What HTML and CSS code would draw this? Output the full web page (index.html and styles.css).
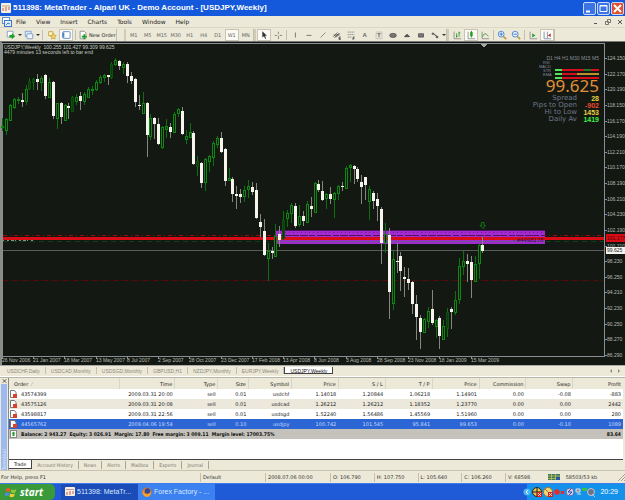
FILE: index.html
```html
<!DOCTYPE html>
<html lang="en">
<head>
<meta charset="utf-8">
<title>MetaTrader</title>
<link rel="stylesheet" href="styles.css">
</head>
<body>
<header class="titlebar">
  <svg class="app-icon" viewBox="0 0 10 10"><rect width="10" height="10" rx="1" fill="#f4efe2"/><path d="M1 3h8" stroke="#c9a46a"/><path d="M2 8V5M5 8V4M8 7V4" stroke="#d05a3c"/></svg>
  <h1>511398: MetaTrader - Alpari UK - Demo Account - [USDJPY,Weekly]</h1>
  <div class="caption-buttons">
    <button aria-label="Minimize"><svg viewBox="0 0 13 13"><path d="M3 9.500h4" stroke="#fff" stroke-width="2"/></svg></button>
    <button aria-label="Maximize"><svg viewBox="0 0 13 13"><path d="M3 3.500h7v6H3zM3 4h7" fill="none" stroke="#fff"/></svg></button>
    <button class="close" aria-label="Close"><svg viewBox="0 0 13 13"><path d="M3 3l7 7M10 3l-7 7" stroke="#fff" stroke-width="2"/></svg></button>
  </div>
</header>

<nav class="menubar">
  <svg class="menu-icon" viewBox="0 0 10 10"><rect x="0.500" y="0.500" width="7" height="6" fill="#fff" stroke="#5c93d8"/><rect x="2.500" y="3.500" width="7" height="6" fill="#e4effc" stroke="#3f78c8"/><path d="M4 8l2-2 2 1" stroke="#3f78c8" fill="none"/></svg>
  <a href="#">File</a><a href="#">View</a><a href="#">Insert</a><a href="#">Charts</a><a href="#">Tools</a><a href="#">Window</a><a href="#">Help</a>
  <div class="mdi-buttons">
    <button aria-label="Minimize chart"><svg viewBox="0 0 6 6"><path d="M1 4.500h3" stroke="#555"/></svg></button>
    <button aria-label="Restore chart"><svg viewBox="0 0 6 6"><path d="M2.500 .500h3v3h-3zM.500 2.500h3v3h-3z" fill="#ece9d8" stroke="#777"/></svg></button>
    <button aria-label="Close chart"><svg viewBox="0 0 6 6"><path d="M1 1l4 4M5 1l-4 4" stroke="#555"/></svg></button>
  </div>
</nav>

<div class="toolbar">
  <div class="tools tools-file">
    <button aria-label="New chart"><svg viewBox="0 0 12 12"><path d="M1.500 1.500h7v7h-7z" fill="#fff" stroke="#7d9bb8"/><path d="M4 6h3V3.500L11 7.500 7 11V9H4z" fill="#22a02a"/></svg></button>
    <i class="caret"></i>
    <button aria-label="Profiles"><svg viewBox="0 0 12 12"><rect x="1.500" y="1.500" width="7" height="6" fill="#dbe8f8" stroke="#7ba0cf"/><rect x="3.500" y="4.500" width="7" height="6" rx="1" fill="#eef5fd" stroke="#6a92c6"/></svg></button>
    <i class="caret"></i>
    <i class="sep"></i>
    <button aria-label="Navigator"><svg viewBox="0 0 12 12"><path d="M2 2h5v5H2z" fill="#fff4c8" stroke="#c79a35"/><path d="M7.500 4l1.200 2.300 2.300.4-1.700 1.700.4 2.400-2.200-1.100-2.200 1.100.4-2.400L4 6.700l2.300-.4z" fill="#f5d860" stroke="#b98c20" stroke-width=".7"/></svg></button>
    <button class="on" aria-label="Terminal"><svg viewBox="0 0 12 12"><rect x="2" y="2" width="9" height="8" rx="1" fill="#fff" stroke="#4a80c8"/><path d="M3 3v6" stroke="#4a80c8" stroke-width="2"/></svg></button>
    <i class="sep"></i>
    <button class="order"><svg viewBox="0 0 12 12"><path d="M2.500 1.500h5l2 2v7h-7z" fill="#fff" stroke="#888"/><path d="M7.500 5v6M4.500 8h6" stroke="#22a02a" stroke-width="2"/></svg>New Order</button>
  </div>
  <div class="tools tools-period">
    <button>M1</button><button>M5</button><button>M15</button><button>M30</button><button>H1</button><button>H4</button><button>D1</button><button class="on">W1</button><button>MN</button>
  </div>
  <div class="tools tools-draw">
    <button class="on" aria-label="Cursor"><svg viewBox="0 0 12 12"><path d="M4 1.500v7.500l2-1.500 1.300 3 1.200-.6-1.300-2.900h2.300z" fill="#333"/></svg></button>
    <button aria-label="Crosshair"><svg viewBox="0 0 12 12"><path d="M6.500 2v3M6.500 7v4M2 6.500h3M8 6.500h3" stroke="#777"/></svg></button>
    <i class="sep"></i>
    <button aria-label="Vertical line"><svg viewBox="0 0 12 12"><path d="M6.500 3v6" stroke="#666"/></svg></button>
    <button aria-label="Horizontal line"><svg viewBox="0 0 12 12"><path d="M3 6.500h6" stroke="#666"/></svg></button>
    <button aria-label="Trendline"><svg viewBox="0 0 12 12"><path d="M3 9l6-6" stroke="#777"/></svg></button>
    <button aria-label="Channel"><svg viewBox="0 0 12 12"><path d="M1.500 8l5-5M3 9l5-5M4.500 9l5-5M2 6h7" stroke="#555"/><path d="M10.500 8.500H8.500v3h2M8.500 10h2" stroke="#444" fill="none"/></svg></button>
    <button aria-label="Fibonacci"><svg viewBox="0 0 12 12"><path d="M2 2.500h8M2 5.500h8M2 8.500h5" stroke="#888" stroke-dasharray="2 .5"/><path d="M8.500 12V8.500h2M8.500 10h1.500" stroke="#444" fill="none"/></svg></button>
    <button class="bold">A</button>
    <button aria-label="Text label"><svg viewBox="0 0 12 12"><rect x="2.500" y="2.500" width="7" height="8" fill="none" stroke="#999" stroke-dasharray="1 1"/><path d="M4 4.500h4M6 4.500V9" stroke="#555"/></svg></button>
    <button aria-label="Ellipse"><svg viewBox="0 0 12 12"><ellipse cx="6" cy="6.500" rx="4" ry="2.500" fill="#777" stroke="#444" stroke-width=".7"/></svg></button>
    <button aria-label="Triangle"><svg viewBox="0 0 12 12"><path d="M3 8l3-3 3 3z" fill="#555" stroke="#444"/></svg></button>
    <button aria-label="Rectangle"><svg viewBox="0 0 12 12"><path d="M3 4.500h6v4H3z" fill="#777" stroke="#555"/></svg></button>
    <button aria-label="Arrows"><svg viewBox="0 0 12 12"><path d="M2 4.500h3M3.500 3v3M5 5l4 3.500M7 8.500h3M8.500 7v3" fill="none" stroke="#555" stroke-width="1.300"/></svg></button>
    <i class="caret"></i>
  </div>
  <div class="tools tools-view">
    <button aria-label="Bar chart"><svg viewBox="0 0 12 12"><path d="M2.500 2v8.500H11" stroke="#888" fill="none"/><path d="M5.500 4v5M8.500 2v6M8 3.500h2M5 7.500h2" stroke="#2d8f2d"/></svg></button>
    <button class="on" aria-label="Candlesticks"><svg viewBox="0 0 12 12"><path d="M2.500 2v8.500H11" stroke="#888" fill="none"/><path d="M6.500 1v8" stroke="#187018"/><rect x="5" y="2.500" width="3" height="5" fill="#22a022"/></svg></button>
    <button aria-label="Line chart"><svg viewBox="0 0 12 12"><path d="M2.500 2v8.500H11" stroke="#888" fill="none"/><path d="M3 8c2-5 4-4 7-.500" stroke="#2d8f2d" fill="none"/></svg></button>
    <i class="sep"></i>
    <button aria-label="Zoom in"><svg viewBox="0 0 12 12"><path d="M7.500 7.500L11 11" stroke="#c29a3c" stroke-width="2"/><circle cx="5" cy="5" r="3.500" fill="#e8f3ff" stroke="#3a7cd0"/><path d="M3 5h4M5 3v4" stroke="#2a62c0"/></svg></button>
    <button aria-label="Zoom out"><svg viewBox="0 0 12 12"><path d="M7.500 7.500L11 11" stroke="#c29a3c" stroke-width="2"/><circle cx="5" cy="5" r="3.500" fill="#e8f3ff" stroke="#3a7cd0"/><path d="M3 5h4" stroke="#2a62c0"/></svg></button>
    <i class="sep"></i>
    <button aria-label="Auto scroll"><svg viewBox="0 0 12 12"><path d="M2.500 2v8.500H11" stroke="#888" fill="none"/><path d="M5 4l4 2.500L5 9z" fill="#2d9f3d"/></svg></button>
    <button class="on" aria-label="Chart shift"><svg viewBox="0 0 12 12"><path d="M2.500 2v8.500H11M6.500 2v8" stroke="#7888a8" fill="none"/><path d="M10.500 4L7 6.500l3.500 2z" fill="#c03a3a"/></svg></button>
  </div>
</div>

<main class="chart">
  <svg id="plot" class="plot" viewBox="0 42 625 323" role="img" aria-label="USDJPY weekly chart">
    <g shape-rendering="crispEdges">
      <rect x="0" y="42" width="2" height="323" fill="#8a8c86"/>
      <path d="M2.500 356V43.500H604.500" class="frame"/>
      <path d="M604.500 43v313.500H2" class="frame"/>
      <path d="M480 44h7l-3 3h-1z" fill="#a8aaa6"/>
      <rect x="276" y="230" width="269" height="14" fill="#a02cd0"/>
      <path d="M276 230.500h269" stroke="#4c1468"/>
      <path d="M285 232.500h258" stroke="#7c1090" stroke-dasharray="1 3"/>
      <path d="M276 241.500h269" stroke="#6e5a86" stroke-dasharray="2 1 4 1"/>
      <path d="M3 235.500h601" stroke="#980c12" stroke-dasharray="4 3 1 3"/>
      <path d="M277 235.500h268" stroke="#501070" stroke-dasharray="6 2"/>
      <path d="M3 241.500h273M546 241.500h58" stroke="#0b4414" stroke-dasharray="5 4"/>
      <path d="M3 240.500h32" stroke="#8b8f88" stroke-dasharray="1 3 2 2 3 1"/>
      <path d="M3 237.500h601" stroke="#7c0a10"/>
      <rect x="3" y="237" width="601" height="3" fill="#d80c14"/>
      <path d="M3 250.500h601" stroke="#575c5c"/>
      <path d="M3 280.500h601" stroke="#5a080c" stroke-dasharray="5 2 1 2"/>
    </g>
    <text x="513" y="242" class="order-tag">- #4498178</text>
    <g id="candles" shape-rendering="crispEdges"></g>
    <path d="M480 225.500h1.500v-3h2.500v3h1.500l-2.500 3z" fill="none" stroke="#0c8a14" stroke-width=".8"/>
    <g id="axes"></g>
    <rect x="606" y="234" width="19" height="8" fill="#d80c14"/>
    <text x="607" y="240" class="tag-red">101.177</text>
    <rect x="606" y="247" width="19" height="7" fill="#f4f4ee"/>
    <text x="607" y="252" class="tag-now">99.625</text>
  </svg>
  <div class="chart-caption">
    <p>USDJPY,Weekly&nbsp; 100.255 101.427 99.309 99.625</p>
    <p>4479 minutes 13 seconds left to bar end</p>
  </div>
  <section class="quote">
    <div class="frames">D1 H4 H1 M30 M15 M5</div>
    <svg class="signals" viewBox="0 0 60 19">
      <g class="signal-names"><text x="4" y="3">RSI</text><text x="0" y="7">MACD</text><text x="4" y="11">STR</text><text x="4" y="15">EMA</text></g>
      <g shape-rendering="crispEdges"><path d="M23 8h37v2H23zM23 12h15v2H23zM23 16h37v2H23z" fill="#d80c1c"/><path d="M16 8h7v2h-7zM16 12h7v2h-7zM16 16h7v2h-7z" fill="#4ee85a"/><path d="M45 8h7v2h-7z" fill="#18802a"/><path d="M38 12h22v2H38z" fill="#b8922c"/></g>
    </svg>
    <strong class="price">99.625</strong>
    <dl>
      <dt>Spread</dt><dd class="yellow">28</dd>
      <dt>Pips to Open</dt><dd class="red">-902</dd>
      <dt>Hi to Low</dt><dd class="yellow">1453</dd>
      <dt>Daily Av</dt><dd class="green">1419</dd>
    </dl>
  </section>
</main>

<nav class="chart-tabs">
  <a href="#">USDCHF,Daily</a><a href="#">USDCAD,Monthly</a><a href="#">USDSGD,Monthly</a><a href="#">GBPUSD,H1</a><a href="#">NZDJPY,Monthly</a><a href="#">EURJPY,Weekly</a><a href="#" class="current">USDJPY,Weekly</a>
  <span class="arrows"><svg viewBox="0 0 12 6"><path d="M3 1v4L1 3zM9 1v4l2-2z" fill="#888"/></svg></span>
</nav>

<section class="terminal">
  <div class="dock">
    <button aria-label="Close terminal"><svg viewBox="0 0 6 6"><path d="M1 1l4 4M5 1l-4 4" stroke="#333"/></svg></button>
    <div class="dock-bar"><span>Terminal</span></div>
  </div>
  <div class="panel">
    <table class="orders">
      <colgroup><col class="c-order"><col class="c-time"><col class="c-type"><col class="c-size"><col class="c-symbol"><col class="c-num"><col class="c-num"><col class="c-num"><col class="c-num"><col class="c-num"><col class="c-num"><col></colgroup>
      <thead><tr><th>Order &nbsp;<span class="sort">⁄</span></th><th>Time</th><th>Type</th><th>Size</th><th>Symbol</th><th>Price</th><th>S / L</th><th>T / P</th><th>Price</th><th>Commission</th><th>Swap</th><th>Profit</th></tr></thead>
      <tbody>
        <tr><td><svg class="doc" viewBox="0 0 7 8"><path d="M.500 .500h4l1.500 2v5H.500z" fill="#fff" stroke="#777"/><rect x="3" y="4" width="4" height="4" fill="#d8402c"/></svg>43574399</td><td>2009.03.31 20:00</td><td>sell</td><td>0.01</td><td>usdchf</td><td>1.14018</td><td>1.20844</td><td>1.06218</td><td>1.14901</td><td>0.00</td><td>-0.08</td><td>-883</td></tr>
        <tr class="alt"><td><svg class="doc" viewBox="0 0 7 8"><path d="M.500 .500h4l1.500 2v5H.500z" fill="#fff" stroke="#777"/><rect x="3" y="4" width="4" height="4" fill="#d8402c"/></svg>43575126</td><td>2009.03.31 20:08</td><td>sell</td><td>0.01</td><td>usdcad</td><td>1.26212</td><td>1.26212</td><td>1.18352</td><td>1.23770</td><td>0.00</td><td>0.00</td><td>2442</td></tr>
        <tr><td><svg class="doc" viewBox="0 0 7 8"><path d="M.500 .500h4l1.500 2v5H.500z" fill="#fff" stroke="#777"/><rect x="3" y="4" width="4" height="4" fill="#d8402c"/></svg>43598817</td><td>2009.03.31 22:56</td><td>sell</td><td>0.01</td><td>usdsgd</td><td>1.52240</td><td>1.56486</td><td>1.45569</td><td>1.51960</td><td>0.00</td><td>0.00</td><td>280</td></tr>
        <tr class="selected"><td><svg class="doc" viewBox="0 0 7 8"><path d="M.500 .500h4l1.500 2v5H.500z" fill="#fff" stroke="#777"/><rect x="3" y="4" width="4" height="4" fill="#d8402c"/></svg>44565762</td><td>2009.04.06 19:54</td><td>sell</td><td>0.10</td><td>usdjpy</td><td>100.742</td><td>101.545</td><td>95.841</td><td>99.653</td><td>0.00</td><td>-0.10</td><td>1089</td></tr>
      </tbody>
      <tfoot><tr><td colspan="11"><svg class="doc" viewBox="0 0 7 8"><rect x=".5" y=".5" width="6" height="7" fill="#fff" stroke="#888"/><path d="M3.500 1.500l2 2h-1V6h-2V3.500h-1z" fill="#22a02a"/></svg>Balance: 2 943.27&nbsp; Equity: 3 026.91&nbsp; Margin: 17.80&nbsp; Free margin: 3 009.11&nbsp; Margin level: 17003.75%</td><td>83.64</td></tr></tfoot>
    </table>
    <nav class="panel-tabs"><a href="#" class="current">Trade</a><a href="#">Account History</a><a href="#">News</a><a href="#">Alerts</a><a href="#">Mailbox</a><a href="#">Experts</a><a href="#">Journal</a></nav>
  </div>
</section>

<footer class="status">
  <span class="help">For Help, press F1</span><span class="s-wide">Default</span><span class="s-wide">2008.07.06 00:00</span><span class="s-num">O: 106.790</span><span class="s-num">H: 107.750</span><span class="s-num">L: 105.640</span><span class="s-num">C: 106.260</span><span class="s-last">V: 68598</span>
  <span class="s-net"><svg viewBox="0 0 12 6"><rect width="12" height="6" fill="#3c7a5c"/><path d="M0 2h12M0 4.500h12M3.500 0v6M7.500 0v6" stroke="#d8c860" stroke-width=".7"/><path d="M8 3h4v3H8z" fill="#2c58a0"/></svg>58503/53 kb</span>
  <svg class="grip" viewBox="0 0 8 8"><path d="M1 8l7-7M4 8l4-4M7 8l1-1" stroke="#a8a490"/></svg>
</footer>

<footer class="taskbar">
  <button class="start"><svg viewBox="0 0 12 12"><path d="M1 3c2-1.500 3-1 4.500 0l-1 3C3 5 2 5.200.300 6z" fill="#f0582c"/><path d="M6.500 3.200c1.500 1 3 .800 4.800 0l-1 3.200c-1.600.800-3 .800-4.700-.200z" fill="#8cc83c"/><path d="M.200 7.200c1.600-.9 2.700-.8 4.200.1l-1 3c-1.500-1-2.600-.9-4-.1z" fill="#4c8cf0"/><path d="M5.300 7.500c1.600.9 3 .9 4.600.1l-1 3c-1.500.9-3 .8-4.500-.1z" fill="#f8cc30"/></svg>start</button>
  <button class="task active"><svg viewBox="0 0 10 10"><rect width="10" height="9" rx="1" fill="#f4efe2"/><path d="M1 2.500h8" stroke="#d09890"/><path d="M2 8V5M5 8V4M8 7V4" stroke="#d05a3c"/></svg>511398: MetaTr...</button>
  <button class="task"><svg viewBox="0 0 10 10"><circle cx="5" cy="5" r="4.500" fill="#e8741c"/><circle cx="5.500" cy="4" r="2.700" fill="#2a4c9c"/><path d="M1 2c0 3 1 5 4 5 2 0 3-1 3-2l1 1c0 2-2 4-4 4C1 9.500-.500 6 1 2z" fill="#f8a028"/></svg>Forex Factory - ...</button>
  <div class="tray">
    <svg viewBox="0 0 74 12"><circle cx="4" cy="6" r="3.500" fill="#48b8f4"/><path d="M5 4L3 6l2 2" stroke="#fff" fill="none"/>
      <circle cx="14" cy="6" r="4.500" fill="#e8c048" stroke="#222"/><path d="M14 2v8M10 6h8" stroke="#222"/><rect x="14" y="6" width="5" height="5" fill="#d81c1c"/><path d="M15 7l3 3M18 7l-3 3" stroke="#fff" stroke-width=".8"/>
      <circle cx="25" cy="6" r="4.500" fill="#f0d878" stroke="#a8702c"/><path d="M22 3l6 6" stroke="#a8702c"/><rect x="25" y="6" width="5" height="5" fill="#d81c1c"/><path d="M26 7l3 3M29 7l-3 3" stroke="#fff" stroke-width=".8"/>
      <path d="M34 3v6M31 6h6M32 4l4 4M36 4l-4 4" stroke="#e42c2c" stroke-width="1.500"/><rect x="38" y="5" width="3" height="3" fill="#e42c2c"/>
      <circle cx="47" cy="6" r="4" fill="#c8d0f0" stroke="#5868a8"/><path d="M48 3l-3 3h4l-3 3" stroke="#3c4890" fill="none"/>
      <path d="M53 3h4v3h-4zM54 8h4" stroke="#d8e4f0" fill="#889"/><path d="M59 2h5v3h-5z" fill="#38c048"/>
      <circle cx="68" cy="6" r="3.500" fill="#68748c" stroke="#c0c8d4"/><path d="M69 8l3 3" stroke="#c0c8d4"/></svg>
    <time>20:29</time>
  </div>
</footer>
<script src="chart.js"></script>
</body>
</html>
```
FILE: styles.css
```css
* { box-sizing: border-box; }
html { height: 100%; }
body {
  margin: 0;
  min-height: 100%;
  display: flex;
  flex-direction: column;
  background: #ece9d8;
  color: #222;
  font: 5px/8px "DejaVu Sans", sans-serif;
}
button {
  border: 0;
  margin: 0;
  padding: 0;
  background: none;
  color: inherit;
  font: inherit;
  display: flex;
  align-items: center;
  justify-content: center;
}
a { color: inherit; text-decoration: none; }
svg { display: block; flex: none; }
h1, p, dl, dd { margin: 0; }

.titlebar {
  display: flex;
  align-items: center;
  height: 16px;
  padding: 0 1px;
  background: #1458dc;
  color: #fff;
}
.app-icon { width: 10px; height: 10px; }
h1 { flex: 1; padding-left: 2px; font: bold 8px/14px "Liberation Sans", sans-serif; white-space: nowrap; }
.caption-buttons { display: flex; gap: 1px; }
.caption-buttons button { width: 13px; height: 13px; border: 1px solid #c8d8f8; border-radius: 2px; background: #3c74e4; }
.caption-buttons .close { background: #e0512c; }
.caption-buttons svg { width: 13px; height: 13px; }

.menubar { display: flex; align-items: center; height: 12px; padding-left: 2px; font-size: 6px; border-bottom: 1px solid #dcd8c6; }
.menu-icon { width: 10px; height: 10px; margin-right: 4px; }
.menubar a { margin-right: 10px; }
.mdi-buttons { display: flex; gap: 6px; margin-left: auto; padding-right: 2px; }
.mdi-buttons svg { width: 6px; height: 6px; }

.toolbar { display: flex; align-items: center; height: 14px; padding-left: 4px; border-bottom: 1px solid #777; }
.tools { display: flex; align-items: center; border-right: 1px solid #c4c0ae; }
.tools button { width: 14px; height: 12px; color: #666; }
.tools svg { width: 10px; height: 10px; }
.tools .on { background: #fbfaf4; border: 1px solid #c8c4b4; }
.tools .order { width: auto; color: #222; }
.tools .order svg { margin-right: 1px; }
.tools .bold { font: bold 6px/10px "Liberation Sans", sans-serif; }
.tools-file { margin-right: 7px; }
.tools-period, .tools-draw, .tools-view { border-left: 2px solid #cfcbb8; padding-left: 1px; }
.caret { border: 2px solid transparent; border-top-color: #333; border-bottom: 0; }
.sep { width: 1px; height: 10px; margin: 0 1px; background: #c4c0ae; }
.tools-file .sep { margin: 0 2px; }

.chart { position: relative; background: #131912; }
.plot { width: 100%; height: auto; }
.frame { fill: none; stroke: #8a8e92; }
.axis-text, .tag-red, .tag-now, .date-text { font: 5px "Liberation Sans", sans-serif; fill: #b8bab4; }
.tag-red { fill: #4c0408; }
.tag-now { fill: #222; }
.order-tag { font: 6px "Liberation Sans", sans-serif; fill: #3c0a4c; }
.up { fill: #131912; stroke: #0c8a10; }
.up-dim { fill: #0b3a0c; stroke: #0b500c; }
.up-wick { stroke: #0c700f; }
.down { fill: #f6f4ec; }
.down-wick { stroke: #85877f; }
.chart-caption { position: absolute; top: 3px; left: 4px; color: #c8cac4; font: 5px/5px "Liberation Sans", sans-serif; }
.quote { position: absolute; top: 13px; right: 26px; width: 70px; color: #70768a; display: flex; flex-direction: column; align-items: flex-end; }
.frames { font: 5px/6px "Liberation Sans", sans-serif; color: #8a8e98; white-space: nowrap; }
.signals { width: 60px; height: 19px; }
.signal-names { font: 4px "Liberation Sans", sans-serif; fill: #8088a4; }
.price { font: 17px/12px "Noto Sans", sans-serif; color: #e09038; }
.quote dl { display: grid; grid-template-columns: auto 16px; column-gap: 6px; font: 7px/7px "DejaVu Sans", sans-serif; text-align: right; white-space: nowrap; margin-top: 3px; }
.quote dd { font: bold 7px/7px "Liberation Sans", sans-serif; display: flex; justify-content: flex-end; }
.yellow { color: #e8d040; }
.red { color: #f04830; }
.green { color: #40f048; }

.chart-tabs { display: flex; height: 12px; padding: 1px 2px 2px 2px; color: #8c897c; font-family: "Liberation Sans", sans-serif; border-top: 1px solid #aaa; border-bottom: 1px solid #fff; }
.chart-tabs a { padding: 0 5px; border-right: 1px solid #c4c0ae; line-height: 8px; }
.chart-tabs .current { color: #111; background: #fff; border: 1px solid #444; border-top: 0; }
.arrows { margin-left: auto; padding: 1px 2px; }
.arrows svg { width: 12px; height: 6px; }

.terminal { flex: 1; display: flex; padding-right: 2px; border-top: 1px solid #b8b5a4; }
.dock { width: 8px; display: flex; flex-direction: column; align-items: center; }
.dock svg { width: 5px; height: 6px; }
.dock-bar { flex: 1; width: 6px; background: #9dbaf0; display: flex; align-items: flex-end; justify-content: center; }
.dock-bar span { writing-mode: vertical-rl; transform: rotate(180deg); line-height: 6px; color: #dde8fc; }
.panel { flex: 1; display: flex; flex-direction: column; background: #fff; border-left: 1px solid #888; }
.orders { width: 100%; table-layout: fixed; border-collapse: collapse; }
.c-order { width: 18%; }
.c-time { width: 9%; }
.c-type { width: 7%; }
.c-size { width: 5%; }
.c-symbol { width: 7%; }
.c-num { width: 7.640%; }
th, td { height: 10px; padding: 0 2px; text-align: right; font-weight: normal; line-height: 8px; white-space: nowrap; }
th { height: 11px; background: #ece9d8; border-right: 1px solid #dad6c4; }
th:first-child { text-align: left; padding-left: 5px; }
td:first-child { text-align: left; padding-left: 1px; }
th:last-child { border-right: 0; }
.sort { color: #999; }
.doc { display: inline-block; width: 7px; height: 8px; margin-right: 4px; vertical-align: top; }
.alt { background: #ece9dc; }
.selected { background: #2b66d4; color: #c8dcfc; }
tfoot tr { background: #c4c2ba; }
tfoot td { font-family: "DejaVu Sans Condensed", "DejaVu Sans", sans-serif; font-weight: bold; color: #111; }
.panel-tabs { margin-top: auto; height: 11px; display: flex; background: #ece9d8; border-top: 1px solid #444; color: #7c796c; font-family: "DejaVu Sans Condensed", "DejaVu Sans", sans-serif; }
.panel-tabs a { margin: 1px 0; padding: 0 5px; border-right: 1px solid #a8a490; }
.panel-tabs .current { margin-top: 0; background: #fff; color: #111; border-color: #444; border-bottom: 1px solid #444; }

.status { display: flex; align-items: center; height: 13px; border-top: 1px solid #c8c4b2; color: #333; }
.status span { padding: 0 2px; border-left: 1px solid #c4c0ae; line-height: 9px; white-space: nowrap; }
.status .help { width: 32%; border: 0; padding-left: 1px; }
.status .s-wide { width: 10.400%; }
.status .s-num { width: 7%; }
.status .s-last { width: 6.500%; }
.status .s-net { display: flex; align-items: center; gap: 6px; border: 0; }
.s-net svg { width: 12px; height: 6px; }
.grip { width: 8px; height: 8px; margin-left: auto; }

.taskbar { display: flex; height: 17px; background: #1f5bd6; color: #fff; font: 7px/14px "Liberation Sans", sans-serif; border-top: 1px solid #3c7cec; }
.start { width: 55px; justify-content: flex-start; padding-left: 5px; background: #3a9a3a; border-radius: 0 5px 5px 0; font: italic bold 10px/14px "Open Sans", sans-serif; margin-right: 6px; }
.start svg { width: 12px; height: 12px; margin-right: 3px; }
.task { width: 77px; justify-content: flex-start; padding-left: 4px; background: #3c81f0; color: #d8e8ff; white-space: nowrap; }
.task svg { width: 10px; height: 10px; margin-right: 2px; }
.task.active { background: #1c4cb8; }
.tray { margin-left: auto; display: flex; align-items: center; background: linear-gradient(90deg, transparent 4px, #1492ea 4px); padding-right: 7px; }
.tray svg { width: 74px; height: 12px; margin-right: 3px; }
```
FILE: chart.js
```js
// One weekly bar per entry: high, body top, body bottom, low, direction (u, d, or x for a dim up bar).
const bars = `118 126 126 131 u|118 119 130 135 u|104 105 120 121 u|98 99 107 109 u|97 99 100 104 u|93 100 102 107 d|85 89 101 105 u|78 81 88 90 x
78 79 82 90 x|74 79 82 90 d|76 78 82 91 u|74 75 96 99 d|78 82 97 97 u|81 82 116 119 d|103 103 118 129 u|102 103 117 124 d|104 105 120 120 u|103 106 108 119 d
96 97 111 111 x|94 97 101 105 u|92 96 101 110 d|92 94 101 105 u|87 89 97 98 u|86 89 90 95 u|80 82 89 91 u|75 77 82 84 u|74 75 77 82 u|75 75 77 85 d|62 64 77 79 x
58 60 64 66 u|60 61 66 70 d|62 64 67 74 u|62 64 76 83 d|72 76 81 84 d|78 79 102 107 d|95 105 106 110 d|92 103 113 113 u|102 103 135 157 d|114 118 136 140 u
117 118 124 139 d|118 124 144 145 d|126 127 147 149 u|119 126 129 138 u|123 127 132 138 d|112 114 132 132 u|108 109 113 117 u|107 111 134 135 d|130 136 139 144 u
123 132 137 138 u|131 133 164 165 d|156 161 166 176 x|162 163 183 188 d|158 159 182 191 u|155 156 161 172 u|141 143 157 166 u|136 138 144 148 u|132 138 152 153 d
148 149 181 186 d|168 178 180 181 u|177 179 194 202 d|186 194 196 209 d|189 194 197 203 d|186 190 196 202 u|180 186 189 198 u|182 187 192 195 d|183 190 218 219 d
214 222 227 237 d|219 231 255 256 d|243 251 258 281 u|247 251 253 259 d|224 236 256 257 u|226 234 240 247 d|211 220 238 240 x|210 213 218 227 u|203 205 213 223 u
203 206 226 228 d|205 216 224 227 u|211 216 221 226 d|201 204 222 223 u|197 206 209 217 d|182 183 212 213 u|180 184 190 192 d|181 191 200 201 d|193 194 198 209 u
187 194 199 204 d|192 193 199 218 u|185 186 193 200 u|182 186 187 191 d|166 168 188 189 u|164 165 167 182 u|165 166 169 184 d|167 169 179 182 d|175 182 187 204 d
177 177 185 200 d|186 189 201 220 u|191 193 201 209 d|193 199 206 221 d|207 209 243 264 d|223 234 242 253 u|228 235 292 319 d|251 259 303 310 u|243 261 262 273 d
252 256 271 291 d|267 277 279 297 d|268 279 283 290 d|281 282 304 314 d|295 304 317 340 d|315 318 332 349 d|318 319 332 332 u|307 311 321 328 u|290 309 323 325 d
319 320 326 338 u|316 318 336 349 d|320 326 339 339 u|308 312 328 337 x|307 309 312 329 d|291 300 312 315 u|258 266 299 304 u|251 261 266 275 u|254 261 264 282 d
256 262 280 298 d|256 264 281 282 u|244 245 263 279 u|237 245 251 253 d`.split(/[|\n]/);

const candles = bars.map((bar, i) => {
  const [high, top, bottom, low, dir] = bar.split(" ");
  const x = Math.floor(2.6 + 3.905 * i);
  const down = dir === "d";
  const wick = `<path d="M${x + 0.5} ${high}V${low}" class="${down ? "down-wick" : "up-wick"}"/>`;
  const h = Math.max(bottom - top, 1);
  const body = down
    ? `<rect x="${x - 1}" y="${top}" width="3" height="${h}" class="down"/>`
    : `<rect x="${x - 0.5}" y="${+top + 0.5}" width="2" height="${h}" class="${dir === "x" ? "up-dim" : "up"}"/>`;
  return wick + body;
});
document.getElementById("candles").innerHTML = candles.join("");

const prices = "124.150 122.170 120.190 118.150 116.170 114.190 112.210 110.170 108.190 106.210 104.230 102.190 100.210 98.230 96.250 94.210 92.230 90.250 88.270 86.290".split(" ");
const dates = "26 Nov 2006|21 Jan 2007|18 Mar 2007|13 May 2007|8 Jul 2007|2 Sep 2007|28 Oct 2007|23 Dec 2007|17 Feb 2008|13 Apr 2008|8 Jun 2008|3 Aug 2008|28 Sep 2008|23 Nov 2008|18 Jan 2009|15 Mar 2009".split("|");
const priceMarks = prices.map((p, i) => {
  const y = Math.round(58 + i * 15.63);
  return `<path d="M605 ${y + 0.5}h2" stroke="#8a8e92"/><text x="607" y="${y + 2}" class="axis-text">${p}</text>`;
});
const dateMarks = dates.map((d, i) => {
  const x = Math.round(2 + i * 31.24);
  return `<path d="M${x + 0.5} 357v2" stroke="#8a8e92"/><text x="${x}" y="362" class="date-text">${d}</text>`;
});
document.getElementById("axes").innerHTML = priceMarks.join("") + dateMarks.join("");
```
